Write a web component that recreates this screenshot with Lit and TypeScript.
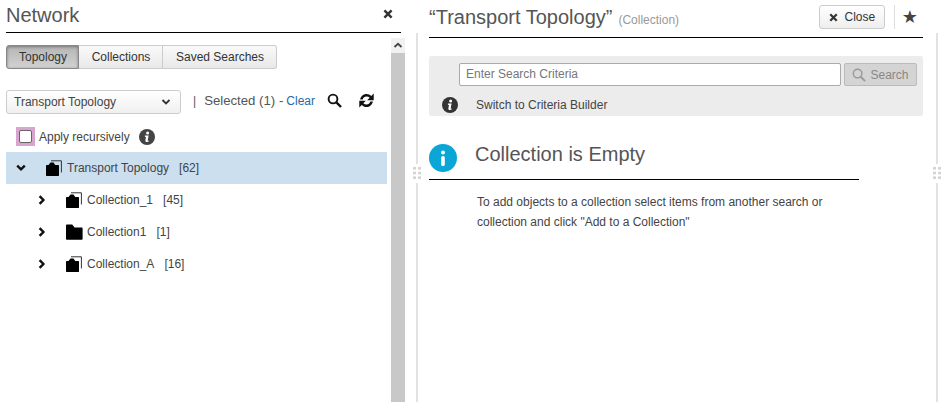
import { LitElement, html, css, svg } from "lit";
import { customElement } from "lit/decorators.js";

const folderOpen = svg`<svg class="folder" width="17" height="16" viewBox="0 0 17 16"><path d="M0 15V6C0 5.4.4 5 1 5H2.5L4.5 2.4H7.5L9.2 5H12.2C12.8 5 13 5.4 13 6V15C13 15.6 12.8 16 12.2 16H1C.4 16 0 15.6 0 15Z" fill="#000"/><path d="M5 .8H15.4V12.5" fill="none" stroke="#333" stroke-width="1"/></svg>`;
const folderClosed = svg`<svg class="folder" width="17" height="16" viewBox="0 0 17 16"><path d="M0 14.8V1.6C0 1 .5.5 1 .5H6.2L8.6 3.5H15.6C16.3 3.5 16.6 4 16.6 4.6V14.8C16.6 15.4 16.2 15.8 15.6 15.8H1C.5 15.8 0 15.4 0 14.8Z" fill="#000"/></svg>`;
const chevDown = svg`<svg width="10" height="8" viewBox="0 0 10 8"><path d="M1.2 1.6 5 5.4 8.8 1.6" fill="none" stroke="#111" stroke-width="2.4"/></svg>`;
const chevRight = svg`<svg width="8" height="10" viewBox="0 0 8 10"><path d="M1.6 1.2 5.4 5 1.6 8.8" fill="none" stroke="#111" stroke-width="2.4"/></svg>`;
const closeX = (size: number) => svg`<svg width=${size} height=${size} viewBox="0 0 10 10"><path d="M1.4 1.4 8.6 8.6M8.6 1.4 1.4 8.6" stroke="#333" stroke-width="2.4"/></svg>`;
const info = (size: number, bg: string) => svg`<svg width=${size} height=${size} viewBox="0 0 16 16"><circle cx="8" cy="8" r="8" fill=${bg}/><circle cx="8.6" cy="4" r="1.5" fill="#fff"/><path d="M5.9 6.6H9.6L8.7 11.2C8.6 11.8 9 11.8 9.9 11.5L9.8 12.6C8.6 13.2 6 13.5 6.4 11.2L7 8 5.9 7.7Z" fill="#fff"/></svg>`;
const infoBlue = svg`<svg width="28" height="28" viewBox="0 0 28 28"><circle cx="14" cy="14" r="14" fill="#0aa6d6"/><circle cx="14" cy="8.6" r="2" fill="#fff"/><rect x="12.2" y="12" width="3.6" height="10" rx="1.6" fill="#fff"/></svg>`;
const grip = svg`<svg width="8" height="12" viewBox="0 0 8 12" fill="#d4d4d4"><rect x="0" y="0" width="3" height="2.6"/><rect x="5" y="0" width="3" height="2.6"/><rect x="0" y="4.7" width="3" height="2.6"/><rect x="5" y="4.7" width="3" height="2.6"/><rect x="0" y="9.4" width="3" height="2.6"/><rect x="5" y="9.4" width="3" height="2.6"/></svg>`;

@customElement("app-root")
export class AppRoot extends LitElement {
  static styles = css`
    :host { display: block; width: 946px; height: 402px; overflow: hidden; background: #fff; font-family: "Liberation Sans", Arial, sans-serif; color: #333; font-size: 12px; }
    .page { display: flex; height: 402px; }
    .left { width: 405px; flex: none; display: flex; flex-direction: column; }
    .lhead { margin-left: 6px; width: 395px; height: 33px; box-sizing: border-box; border-bottom: 1px solid #000; display: flex; align-items: center; justify-content: space-between; padding: 0 8px 2px 0; flex: none; }
    .lhead h1 { margin: 0; font-size: 20px; font-weight: 400; color: #555; }
    .x { display: flex; margin-bottom: 3px; }
    .lbody { flex: 1; display: flex; min-height: 0; padding-top: 5px; }
    .lmain { width: 391px; flex: none; }
    .scroll { width: 14px; flex: none; display: flex; flex-direction: column; }
    .scrollup { height: 15px; display: flex; align-items: center; justify-content: center; background: #f1f1f1; }
    .thumb { flex: 1; background: #c8c8c8; }
    .tabs { display: flex; margin: 7px 0 0 6px; height: 24px; width: 271px; box-sizing: border-box; }
    .tab { box-sizing: border-box; height: 24px; padding-left: 1px; border: 1px solid #ccc; border-left: none; background: linear-gradient(#fafafa, #e8e8e8); display: flex; align-items: center; justify-content: center; color: #333; }
    .tab.t1 { width: 73px; border: 1px solid #888; border-radius: 3px 0 0 3px; background: linear-gradient(#b5b5b5, #d2d2d2); box-shadow: inset 0 1px 3px #777; }
    .tab.t2 { width: 84px; }
    .tab.t3 { width: 114px; border-radius: 0 3px 3px 0; }
    .toolbar { display: flex; align-items: center; margin: 21px 0 0 6px; height: 24px; }
    .select { box-sizing: border-box; width: 175px; height: 24px; border: 1px solid #ccc; border-radius: 3px; background: linear-gradient(#fff, #f0f0f0); display: flex; align-items: center; justify-content: space-between; padding: 0 9px 0 7px; color: #444; }
    .pipe { margin: -3px 0 0 12px; color: #555; font-size: 12px; }
    .sel { margin: -3px 0 0 8px; font-size: 13.2px; color: #555; }
    .clear { margin: -3px 0 0 3px; color: #2a6a9e; }
    .sic { margin: -3px 0 0 12px; display: flex; }
    .ric { margin: -3px 0 0 16px; display: flex; }
    .apply { display: flex; align-items: center; margin: 13px 0 0 16px; height: 19px; }
    .pink { box-sizing: border-box; width: 19px; height: 19px; background: #d9a4cf; padding: 3px; }
    .cb { box-sizing: border-box; display: block; width: 13px; height: 13px; background: #fff; border: 1px solid #666; border-radius: 2px; }
    .applyt { margin-left: 4px; color: #444; }
    .appinfo { margin-left: 9px; display: flex; }
    .tree { margin: 6px 0 0 6px; width: 381px; }
    .row { height: 32px; display: flex; align-items: center; color: #444; }
    .row.sel-row { background: #cbdfef; }
    .chev { width: 10px; display: flex; justify-content: center; flex: none; }
    .row.root .chev { margin-left: 10px; margin-right: 20px; }
    .row.child .chev { margin-left: 31px; margin-right: 19px; }
    .folder { flex: none; }
    .name { margin-left: 4px; }
    .count { margin-left: 10px; }
    .right { flex: 1; min-width: 0; display: flex; flex-direction: column; position: relative; }
    .rhead { margin-left: 24px; width: 494px; height: 38px; box-sizing: border-box; border-bottom: 1px solid #000; display: flex; align-items: center; padding: 0 5px 3px 0; flex: none; position: relative; z-index: 1; background: #fff; }
    .title { font-size: 20px; color: #555; }
    .sub { font-size: 12px; color: #999; margin-left: 6px; margin-top: 5px; }
    .spacer { flex: 1; }
    .closeb { box-sizing: border-box; width: 66px; height: 24px; border: 1px solid #ccc; border-radius: 3px; background: linear-gradient(#fff, #eee); display: flex; align-items: center; justify-content: center; gap: 7px; color: #333; }
    .vsep { width: 1px; height: 24px; background: #ddd; margin: 0 7px 0 9px; }
    .star { font-size: 18px; line-height: 1; color: #444; font-family: "DejaVu Sans", sans-serif; }
    .rbody { flex: 1; margin-left: 11px; width: 522px; box-sizing: border-box; border-left: 2px solid #e2e2e2; border-right: 2px solid #e2e2e2; padding: 23px 13px 0 11px; margin-top: -5px; }
    .panel { background: #ececec; border-radius: 2px; height: 60px; box-sizing: border-box; padding: 7px 6px 0 30px; }
    .srow { display: flex; gap: 3px; }
    .input { box-sizing: border-box; width: 382px; height: 23px; border: 1px solid #aaa; border-radius: 2px; background: #fff; display: flex; align-items: center; padding: 0 0 2px 6px; color: #777; }
    .sbtn { box-sizing: border-box; width: 73px; height: 23px; border: 1px solid #bbb; border-radius: 2px; background: #d4d4d4; color: #888; display: flex; align-items: center; justify-content: center; gap: 4px; }
    .swrow { display: flex; align-items: center; margin: 11px 0 0 -17px; color: #444; }
    .swrow span { margin-left: 18px; }
    .swrow svg { display: block; }
    .ehead { margin-top: 27px; width: 430px; height: 37px; box-sizing: border-box; border-bottom: 1px solid #000; display: flex; padding-bottom: 7px; }
    .ehead svg { flex: none; margin-top: 1px; }
    .ehead span { font-size: 20px; color: #555; margin-left: 18px; line-height: 22px; }
    .etext { margin: 12px 0 0 48px; width: 360px; line-height: 20px; color: #444; }
    .grip { position: absolute; top: 164px; display: flex; padding: 3px 0 4px; background: #fff; }
    .g1 { left: 8px; } .g2 { left: 528px; }
  `;

  private row(kind: string, chev: unknown, folder: unknown, name: string, count: string) {
    return html`<div class="row ${kind}"><span class="chev">${chev}</span>${folder}<span class="name">${name}</span><span class="count">${count}</span></div>`;
  }

  render() {
    return html`<div class="page">
      <section class="left">
        <header class="lhead"><h1>Network</h1><span class="x">${closeX(10)}</span></header>
        <div class="lbody">
          <div class="lmain">
            <div class="tabs"><div class="tab t1">Topology</div><div class="tab t2">Collections</div><div class="tab t3">Saved Searches</div></div>
            <div class="toolbar">
              <div class="select"><span>Transport Topology</span><svg width="10" height="8" viewBox="0 0 10 8"><path d="M1.5 2 5 5.5 8.5 2" fill="none" stroke="#333" stroke-width="1.8"/></svg></div>
              <span class="pipe">|</span><span class="sel">Selected (1) -</span><span class="clear">Clear</span>
              <span class="sic"><svg width="15" height="15" viewBox="0 0 15 15"><circle cx="6" cy="6" r="4.4" fill="none" stroke="#111" stroke-width="1.9"/><path d="M9.4 9.4 14 14" stroke="#111" stroke-width="2.4"/></svg></span>
              <span class="ric"><svg width="17" height="17" viewBox="0 0 16 16"><path d="M2 7C2.6 3.8 5.1 1.8 8 1.8c1.8 0 3.3.7 4.5 1.9L14.8 1.4V7.8H8.6L11 5.4C10.2 4.6 9.2 4.2 8 4.2 6.2 4.2 4.9 5.3 4.4 7Z" fill="#111"/><path d="M14 9C13.4 12.2 10.9 14.2 8 14.2c-1.8 0-3.3-.7-4.5-1.9L1.2 14.6V8.2H7.4L5 10.6c.8.8 1.8 1.2 3 1.2 1.8 0 3.1-1.1 3.6-2.8Z" fill="#111"/></svg></span>
            </div>
            <div class="apply"><span class="pink"><span class="cb"></span></span><span class="applyt">Apply recursively</span><span class="appinfo">${info(16, "#444")}</span></div>
            <div class="tree">
              ${this.row("root sel-row", chevDown, folderOpen, "Transport Topology", "[62]")}
              ${this.row("child", chevRight, folderOpen, "Collection_1", "[45]")}
              ${this.row("child", chevRight, folderClosed, "Collection1", "[1]")}
              ${this.row("child", chevRight, folderOpen, "Collection_A", "[16]")}
            </div>
          </div>
          <div class="scroll"><div class="scrollup"><svg width="10" height="7" viewBox="0 0 10 7"><path d="M1.5 5 5 1.8 8.5 5" fill="none" stroke="#444" stroke-width="1.8"/></svg></div><div class="thumb"></div></div>
        </div>
      </section>
      <section class="right">
        <header class="rhead">
          <span class="title">“Transport Topology”</span><span class="sub">(Collection)</span><span class="spacer"></span>
          <div class="closeb">${closeX(9)}<span>Close</span></div><span class="vsep"></span><span class="star">★</span>
        </header>
        <div class="rbody">
          <div class="panel">
            <div class="srow"><div class="input">Enter Search Criteria</div><div class="sbtn"><svg width="14" height="14" viewBox="0 0 15 15"><circle cx="6" cy="6" r="4.6" fill="none" stroke="#999" stroke-width="1.5"/><path d="M9.4 9.4 14 14" stroke="#999" stroke-width="2"/></svg>Search</div></div>
            <div class="swrow">${info(16, "#333")}<span>Switch to Criteria Builder</span></div>
          </div>
          <div class="ehead">${infoBlue}<span>Collection is Empty</span></div>
          <div class="etext">To add objects to a collection select items from another search or collection and click "Add to a Collection"</div>
        </div>
        <span class="grip g1">${grip}</span><span class="grip g2">${grip}</span>
      </section>
    </div>`;
  }
}
